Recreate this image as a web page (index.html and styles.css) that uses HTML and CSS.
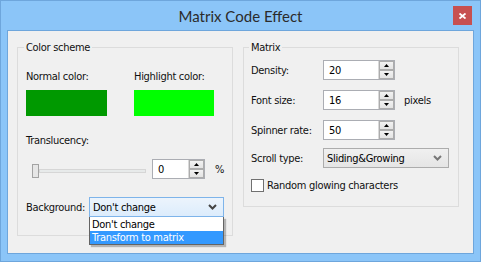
FILE: index.html
```html
<!DOCTYPE html>
<html>
<head>
<meta charset="utf-8">
<link rel="stylesheet" href="styles.css">
</head>
<body>
<div class="window">
  <div class="titlebar">
    <span class="title">Matrix Code Effect</span>
    <div class="close"><svg width="7" height="6" viewBox="0 0 7 6"><path d="M0.5 0.5 L6.5 5.5 M6.5 0.5 L0.5 5.5" stroke="#fff" stroke-width="1.8" fill="none"/></svg></div>
  </div>
  <div class="client">
    <div class="group group-color">
      <span class="legend">Color scheme</span>
      <div class="swatches">
        <div class="swatch-col">
          <span class="lbl">Normal color:</span>
          <div class="swatch swatch-normal"></div>
        </div>
        <div class="swatch-col">
          <span class="lbl">Highlight color:</span>
          <div class="swatch swatch-high"></div>
        </div>
      </div>
      <span class="lbl trans-lbl">Translucency:</span>
      <div class="slider-row">
        <div class="slider"><div class="thumb"></div><div class="track"></div></div>
        <div class="spin spin-small">
          <span class="spin-val">0</span>
          <div class="spin-btns">
            <div class="spin-btn"><svg width="5" height="3" viewBox="0 0 5 3"><path d="M2.5 0 L5 3 L0 3Z" fill="#000"/></svg></div>
            <div class="spin-btn"><svg width="5" height="3" viewBox="0 0 5 3"><path d="M0 0 L5 0 L2.5 3Z" fill="#000"/></svg></div>
          </div>
        </div>
        <span class="lbl unit-pct">%</span>
      </div>
      <div class="bg-row">
        <span class="lbl bg-lbl">Background:</span>
        <div class="combo-wrap">
          <div class="combo combo-active">
            <span class="combo-val">Don't change</span>
            <svg class="chev" width="9" height="6" viewBox="0 0 9 6"><path d="M1 1 L4.5 4.5 L8 1" stroke="#444" stroke-width="2" fill="none"/></svg>
          </div>
          <div class="droplist">
            <div class="opt">Don't change</div>
            <div class="opt opt-sel">Transform to matrix</div>
          </div>
        </div>
      </div>
    </div>
    <div class="group group-matrix">
      <span class="legend">Matrix</span>
      <div class="mrow">
        <span class="lbl mlbl">Density:</span>
        <div class="spin spin-wide">
          <span class="spin-val">20</span>
          <div class="spin-btns">
            <div class="spin-btn"><svg width="5" height="3" viewBox="0 0 5 3"><path d="M2.5 0 L5 3 L0 3Z" fill="#000"/></svg></div>
            <div class="spin-btn"><svg width="5" height="3" viewBox="0 0 5 3"><path d="M0 0 L5 0 L2.5 3Z" fill="#000"/></svg></div>
          </div>
        </div>
      </div>
      <div class="mrow">
        <span class="lbl mlbl">Font size:</span>
        <div class="spin spin-wide">
          <span class="spin-val">16</span>
          <div class="spin-btns">
            <div class="spin-btn"><svg width="5" height="3" viewBox="0 0 5 3"><path d="M2.5 0 L5 3 L0 3Z" fill="#000"/></svg></div>
            <div class="spin-btn"><svg width="5" height="3" viewBox="0 0 5 3"><path d="M0 0 L5 0 L2.5 3Z" fill="#000"/></svg></div>
          </div>
        </div>
        <span class="lbl unit-px">pixels</span>
      </div>
      <div class="mrow">
        <span class="lbl mlbl">Spinner rate:</span>
        <div class="spin spin-wide">
          <span class="spin-val">50</span>
          <div class="spin-btns">
            <div class="spin-btn"><svg width="5" height="3" viewBox="0 0 5 3"><path d="M2.5 0 L5 3 L0 3Z" fill="#000"/></svg></div>
            <div class="spin-btn"><svg width="5" height="3" viewBox="0 0 5 3"><path d="M0 0 L5 0 L2.5 3Z" fill="#000"/></svg></div>
          </div>
        </div>
      </div>
      <div class="mrow mrow-combo">
        <span class="lbl mlbl">Scroll type:</span>
        <div class="combo combo-scroll">
          <span class="combo-val">Sliding&amp;Growing</span>
          <svg class="chev" width="9" height="6" viewBox="0 0 9 6"><path d="M1 1 L4.5 4.5 L8 1" stroke="#777" stroke-width="2" fill="none"/></svg>
        </div>
      </div>
      <div class="check-row">
        <div class="checkbox"></div>
        <span class="lbl">Random glowing characters</span>
      </div>
    </div>
  </div>
</div>
</body>
</html>
```
FILE: styles.css
```css
* { box-sizing: border-box; }
html, body { margin: 0; padding: 0; }
body {
  width: 481px;
  height: 262px;
  overflow: hidden;
  font-family: "DejaVu Sans Condensed", "DejaVu Sans", sans-serif;
  font-size: 11px;
  letter-spacing: -0.3px;
  color: #111;
}
.window {
  width: 481px;
  height: 262px;
  background: #8bc5f8;
  border: 1px solid #6ea6dc;
  display: flex;
  flex-direction: column;
}
.titlebar {
  height: 29px;
  flex: none;
  display: grid;
  grid-template-columns: 1fr auto 1fr;
  align-items: start;
}
.title {
  grid-column: 2;
  font-family: Lato, sans-serif;
  font-size: 15px;
  letter-spacing: 0;
  color: #2b2b2b;
  line-height: 18px;
  margin-top: 6px;
}
.close {
  grid-column: 3;
  justify-self: end;
  width: 19px;
  height: 19px;
  margin: 5px 8px 0 0;
  background: #c75050;
  display: flex;
  align-items: center;
  justify-content: center;
}
.client {
  flex: none;
  height: 224px;
  margin: 0 6px 7px 6px;
  background: #f0f0f0;
  border: 1px solid #6ea6dc;
  display: flex;
  align-items: flex-start;
  padding: 16px 0 0 9px;
}
.group {
  border: 1px solid #dcdcdc;
  width: 216px;
  display: flex;
  flex-direction: column;
  align-items: flex-start;
}
.group-color { height: 189px; padding-left: 8px; }
.group-matrix { height: 160px; margin-left: 10px; padding-left: 7px; }
.legend {
  line-height: 13px;
  margin: -7px 0 0 -2px;
  padding: 0 2px;
  background: #f0f0f0;
}
.lbl { line-height: 13px; white-space: nowrap; }
.swatches { display: flex; gap: 27px; margin-top: 16px; }
.swatch-col { display: flex; flex-direction: column; gap: 7px; }
.swatch { height: 26px; }
.swatch-normal { width: 81px; background: #009900; }
.swatch-high { width: 80px; background: #00ff00; }
.trans-lbl { margin-top: 18px; }
.slider-row { display: flex; align-items: center; margin-top: 12px; }
.slider {
  width: 114px;
  height: 20px;
  margin-left: 6px;
  display: flex;
  align-items: center;
}
.thumb {
  width: 7px;
  height: 14px;
  border: 1px solid #a3a3a3;
  background: #e6e6e6;
  flex: none;
  margin-top: 3px;
}
.track {
  flex: 1;
  height: 4px;
  border: 1px solid #d6d6d6;
  background: #e7eaea;
  margin-top: 3px;
}
.spin {
  height: 20px;
  border: 1px solid #abadb3;
  background: #fff;
  display: flex;
  align-items: center;
  color: #000;
}
.spin-small { width: 53px; margin-left: 6px; }
.spin-small .spin-val { padding-left: 5px; }
.spin-wide { width: 72px; }
.spin-val { flex: 1; padding-left: 5px; line-height: 13px; }
.spin-btns {
  width: 16px;
  height: 18px;
  display: flex;
  flex-direction: column;
  border-left: 1px solid #d9d9d9;
}
.spin-btn {
  flex: 1;
  border: 1px solid #acacac;
  background: linear-gradient(#f2f2f2, #e3e3e3);
  display: flex;
  align-items: center;
  justify-content: center;
}
.unit-pct { margin-left: 10px; }
.bg-row { display: flex; align-items: center; margin-top: 18px; }
.bg-lbl { width: 63px; }
.combo-wrap { position: relative; }
.combo {
  height: 20px;
  display: flex;
  align-items: center;
  color: #000;
}
.combo-active {
  width: 135px;
  border: 1px solid #7eb4ea;
  background: linear-gradient(#ecf4fc, #dcecfc);
}
.combo-scroll {
  width: 126px;
  border: 1px solid #acacac;
  background: linear-gradient(#f0f0f0, #e5e5e5);
}
.combo-val { flex: 1; padding-left: 3px; line-height: 13px; }
.chev { margin-right: 6px; }
.droplist {
  position: absolute;
  left: 0;
  top: 20px;
  width: 135px;
  border: 1px solid #646464;
  border-top: none;
  background: #fff;
  box-shadow: 2px 2px 1px rgba(0,0,0,0.25);
  color: #000;
}
.opt { height: 13px; line-height: 13px; padding-left: 2px; margin-top: 0; }
.opt:first-child { height: 14px; padding-top: 1px; }
.opt-sel { background: #3399ff; color: #fff; }
.mrow { display: flex; align-items: center; margin-top: 10px; }
.group-matrix .legend + .mrow { margin-top: 6px; }
.mrow-combo { margin-top: 8px; }
.mlbl { width: 72px; }
.unit-px { margin-left: 9px; }
.check-row { display: flex; align-items: center; margin-top: 11px; }
.checkbox {
  width: 13px;
  height: 13px;
  border: 1px solid #707070;
  background: #fff;
  margin-right: 3px;
}
```
